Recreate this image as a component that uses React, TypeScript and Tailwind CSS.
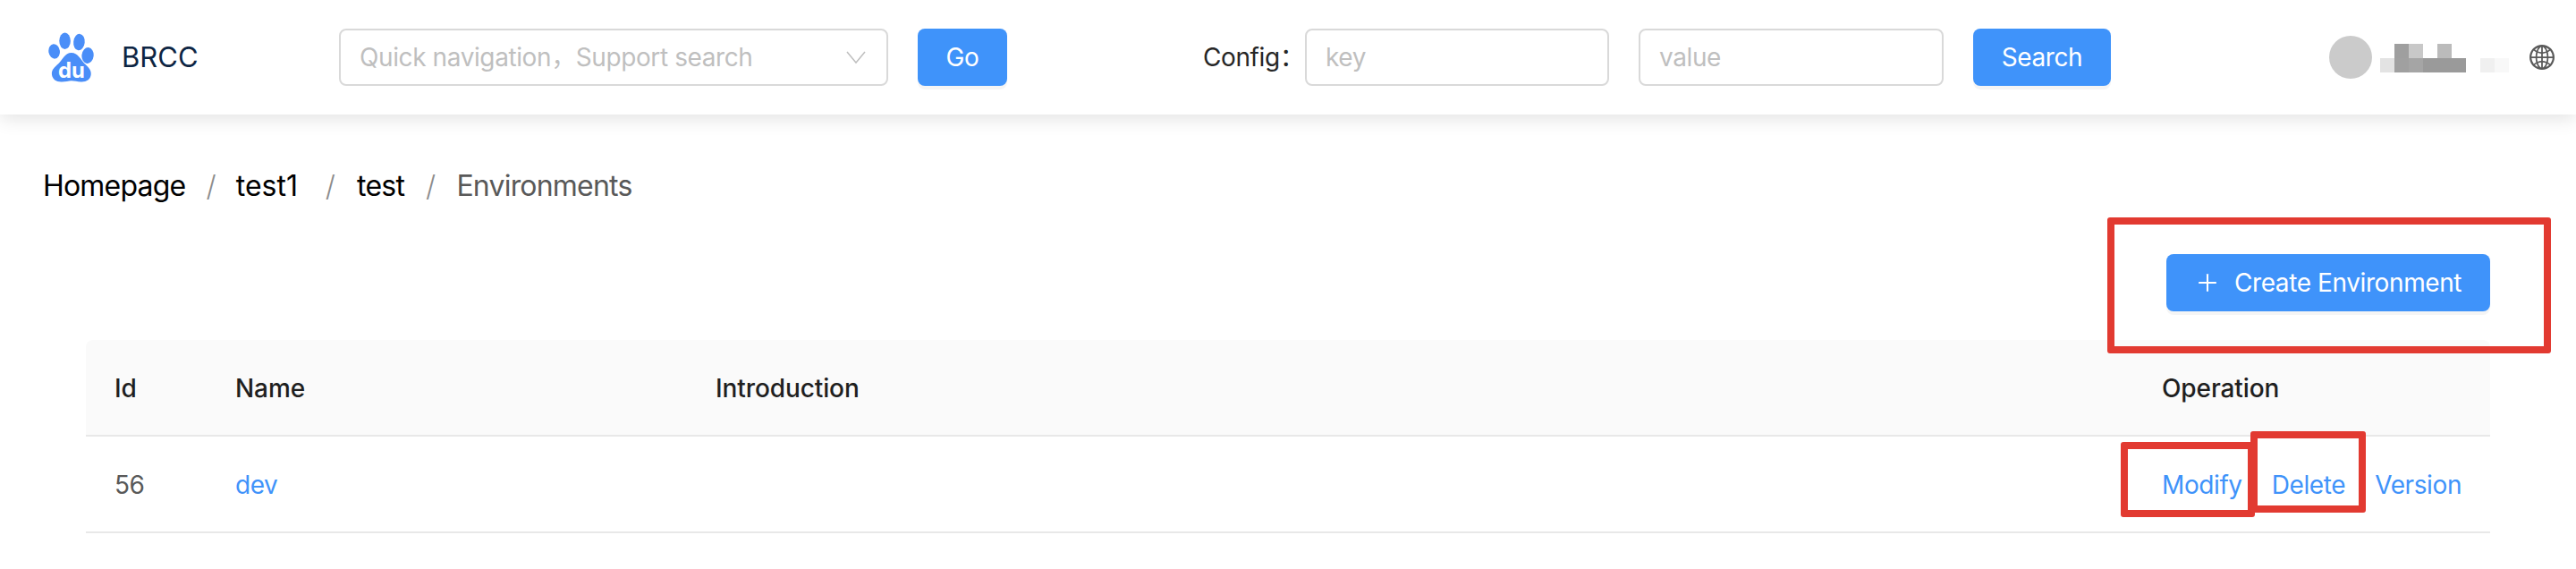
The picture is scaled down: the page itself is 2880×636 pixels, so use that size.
import { AiOutlineGlobal, AiOutlinePlus } from "react-icons/ai";

const font = "font-['Inter','Noto_Sans_CJK_SC',sans-serif]";

const BaiduLogo = () => (
    <svg width="51" height="56" viewBox="72 55 154 168" className="shrink-0">
        <g fill="#4a8ef8">
            <ellipse cx="92" cy="119" rx="19" ry="25" transform="rotate(-8 92 119)" />
            <ellipse cx="128" cy="84" rx="19" ry="28" />
            <ellipse cx="176" cy="88" rx="19" ry="28" transform="rotate(6 176 88)" />
            <ellipse cx="205" cy="133" rx="20" ry="27" transform="rotate(6 205 133)" />
            <path d="M150 124c22 0 30 22 44 36 14 13 24 22 22 38-2 17-16 25-34 24-12-1-22-4-32-4s-20 4-32 4c-18 1-32-8-34-24-2-17 10-26 22-37 14-13 22-37 44-37z" />
        </g>
        <text x="150" y="208" textAnchor="middle" fill="#fff" fontSize="72" fontWeight="700" fontFamily="Inter">du</text>
    </svg>
);

const BlurBlock = ({ color }: { color: string }) => (
    <div className="w-4 h-4" style={{ backgroundColor: color }} />
);

// blurred user name, two rows of 16px blocks
const BlurredName = () => (
    <div className="grid grid-cols-[repeat(9,16px)] grid-rows-[16px_16px] ml-[9px] mt-[1px]">
        {["#ffffff", "#9f9f9f", "#c8c8c8", "#ffffff", "#bbbbbb", "#ffffff", "#ffffff", "#ffffff", "#ffffff",
          "#e3e3e3", "#a0a0a0", "#a5a5a5", "#9a9a9a", "#9a9a9a", "#9a9a9a", "#ffffff", "#f0f0f0", "#f8f8f8",
        ].map((color, i) => <BlurBlock key={i} color={color} />)}
    </div>
);

const PrimaryButton = ({ label, className }: { label: string; className: string }) => (
    <button className={`h-16 rounded-lg bg-[#3f93fa] text-white text-[28px] tracking-[-0.4px] shadow-[0_4px_0_rgba(0,0,0,0.04)] shrink-0 ${className}`}>
        {label}
    </button>
);

const TextInput = ({ placeholder, className }: { placeholder: string; className: string }) => (
    <div className={`h-16 flex items-center rounded-lg border-2 border-[#d9d9d9] bg-white pl-[21px] text-[28px] tracking-[-0.4px] text-[#bfbfbf] shrink-0 ${className}`}>
        {placeholder}
    </div>
);

const Marker = ({ className }: { className: string }) => (
    <div className={`absolute border-[8px] border-[#e23a31] rounded-[3px] ${className}`} />
);

const Slash = () => <span className="text-[#8c8c8c] font-light">/</span>;

const App = () => {
    return (
        <div className={`relative w-[2880px] h-[636px] bg-white overflow-hidden ${font}`}>
            <header className="h-32 flex items-center pl-[54px] bg-white shadow-[0_4px_20px_rgba(0,0,0,0.12)]">
                <div className="w-[325px] flex items-center shrink-0">
                    <BaiduLogo />
                    <span className="ml-[31px] text-[31px] text-[#0d2543]">BRCC</span>
                </div>
                <div className="w-[614px] h-16 flex items-center justify-between rounded-lg border-2 border-[#d9d9d9] pl-[21px] pr-[22px] text-[28px] tracking-[-0.4px] text-[#bfbfbf] shrink-0">
                    <span>Quick navigation，Support search</span>
                    <svg width="24" height="16" viewBox="0 0 24 16" fill="none" stroke="#bfbfbf" strokeWidth="1.5">
                        <path d="M2 2l10 12L22 2" />
                    </svg>
                </div>
                <PrimaryButton label="Go" className="w-[100px] ml-[33px]" />
                <span className="ml-[219px] w-[114px] text-[28px] tracking-[-0.4px] text-[#262626] shrink-0">Config：</span>
                <TextInput placeholder="key" className="w-[340px]" />
                <TextInput placeholder="value" className="w-[341px] ml-[33px]" />
                <PrimaryButton label="Search" className="w-[154px] ml-[33px]" />
                <div className="ml-[244px] w-12 h-12 rounded-full bg-[#cbcbcb] shrink-0" />
                <BlurredName />
                <AiOutlineGlobal className="ml-[21px] text-[#595959] shrink-0" size={32} />
            </header>

            <nav className="flex items-center pl-12 mt-[58px] text-[32px] leading-[44px] tracking-[-0.8px] text-black">
                <span>Homepage</span>
                <span className="mx-[23px]"><Slash /></span>
                <span className="w-[75px] tracking-[0px]">test1</span>
                <span className="mx-[25px]"><Slash /></span>
                <span>test</span>
                <span className="mx-[24px]"><Slash /></span>
                <span className="text-[#595959]">Environments</span>
            </nav>

            <div className="flex justify-end mr-24 mt-[54px]">
                <button className="w-[362px] h-16 flex items-center justify-center gap-[16px] rounded-lg bg-[#3f93fa] text-white text-[28px] tracking-[-0.4px] shadow-[0_4px_0_rgba(0,0,0,0.04)]">
                    <AiOutlinePlus size={28} />
                    Create Environment
                </button>
            </div>

            <div className="mx-24 mt-8 text-[28px] tracking-[-0.4px]">
                <div className="h-[108px] pt-[2px] grid grid-cols-[135px_537px_1fr_399px] items-center rounded-t-lg border-b-2 border-[#e8e8e8] bg-[#fafafa] font-medium tracking-[-0.1px] text-[#1f1f1f]">
                    <div className="pl-8">Id</div>
                    <div className="pl-8">Name</div>
                    <div className="pl-8">Introduction</div>
                    <div className="pl-8">Operation</div>
                </div>
                <div className="h-[108px] pt-[2px] grid grid-cols-[135px_537px_1fr_399px] items-center border-b-2 border-[#e8e8e8] text-[#595959]">
                    <div className="pl-8">56</div>
                    <div className="pl-8 text-[#3f93fa]">dev</div>
                    <div />
                    <div className="pl-8 flex gap-[33px] text-[#3f93fa]">
                        <span>Modify</span>
                        <span>Delete</span>
                        <span>Version</span>
                    </div>
                </div>
            </div>

            <Marker className="left-[2356px] top-[243px] w-[496px] h-[152px]" />
            <Marker className="left-[2371px] top-[494px] w-[150px] h-[84px]" />
            <Marker className="left-[2516px] top-[482px] w-[129px] h-[91px]" />
        </div>
    );
};

export default App;
